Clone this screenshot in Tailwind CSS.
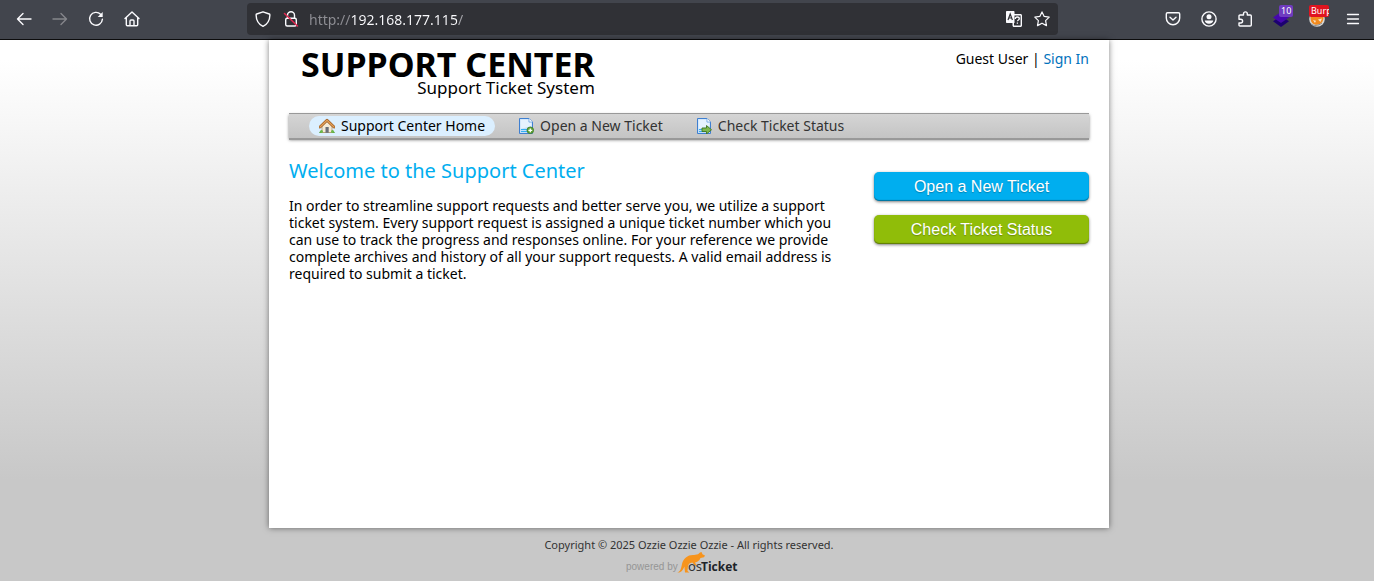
<!DOCTYPE html>
<html lang="en">
<head>
  <meta charset="UTF-8" />
  <meta name="viewport" content="width=device-width, initial-scale=1.0" />
  <title>Support Center</title>
  <script src="https://cdn.jsdelivr.net/npm/@tailwindcss/browser@4"></script>
</head>
<body class="min-h-screen flex flex-col bg-[#c8c8c8] font-['Noto_Sans',sans-serif] text-sm text-black">
  <!-- Browser toolbar -->
  <div class="h-10 shrink-0 flex items-center pb-px bg-[#42454d] border-b border-[#0c0c0d] text-[#fbfbfe]">
    <div class="w-[247px] shrink-0 flex pl-1.5">
      <button aria-label="Back" class="w-9 h-8 flex items-center justify-center">
        <svg class="size-4" viewBox="0 0 16 16" fill="none" stroke="currentColor" stroke-width="1.4" stroke-linecap="round" stroke-linejoin="round"><path d="M15 8H1.5M7 2.5 1.5 8 7 13.5" /></svg>
      </button>
      <button aria-label="Forward" disabled class="w-9 h-8 flex items-center justify-center text-[#85868b]">
        <svg class="size-4" viewBox="0 0 16 16" fill="none" stroke="currentColor" stroke-width="1.4" stroke-linecap="round" stroke-linejoin="round"><path d="M1 8h13.5M9 2.5 14.5 8 9 13.5" /></svg>
      </button>
      <button aria-label="Reload" class="w-9 h-8 flex items-center justify-center">
        <svg class="size-4" viewBox="0 0 16 16" fill="none" stroke="currentColor" stroke-width="1.4" stroke-linecap="round"><path d="M12.6 3.3A6.4 6.4 0 1 0 14.4 8.2" /><path d="M14.7 1v5H9.7z" fill="currentColor" stroke="none" /></svg>
      </button>
      <button aria-label="Home" class="w-9 h-8 flex items-center justify-center">
        <svg class="size-4" viewBox="0 0 16 16" fill="none" stroke="currentColor" stroke-width="1.4" stroke-linecap="round" stroke-linejoin="round"><path d="M1 7.5 8 1l7 6.5M2.3 6.7v7c0 .6.4 1 1 1h9.4c.6 0 1-.4 1-1v-7M6 14.5V10c0-.5.4-1 1-1h2c.6 0 1 .5 1 1v4.5" /></svg>
      </button>
    </div>
    <div class="h-8 flex-1 min-w-0 flex items-center bg-[#303136] rounded px-0.5">
      <button aria-label="Tracking protection" class="w-7 h-7 flex items-center justify-center">
        <svg class="size-4" viewBox="0 0 16 16" fill="none" stroke="currentColor" stroke-width="1.4" stroke-linejoin="round"><path d="M8 .8 14.3 3c.5.2.6.5.6.9-.1 4.8-1.9 9-6.9 11.4C3 12.9 1.2 8.7 1.1 3.9c0-.4.1-.7.6-.9z" /></svg>
      </button>
      <button aria-label="Connection is not secure" class="w-7 h-7 flex items-center justify-center">
        <svg class="size-4" viewBox="0 0 16 16" fill="none" stroke="currentColor" stroke-width="1.4" stroke-linejoin="round"><path d="M4.5 7V4.2a3.5 3.5 0 0 1 7 0V7" /><rect x="2.7" y="7.2" width="10.6" height="7.8" rx="1.5" /><path d="M1.5 2.5 14.5 15" stroke="#e22850" stroke-width="1.5" stroke-linecap="round" /></svg>
      </button>
      <input type="text" aria-label="Address" value="http://192.168.177.115/" class="flex-1 min-w-0 h-7 pl-1 text-sm text-transparent caret-white outline-none bg-clip-text bg-[linear-gradient(90deg,#8f8f95_46px,#fbfbfe_46px,#fbfbfe_152px,#a5a5aa_152px)]" />
      <button aria-label="Translate page" class="w-7 h-7 flex items-center justify-center">
        <svg class="size-4" viewBox="0 0 16 16" fill="none"><path d="M1 0h6.5c.6 0 1 .4 1 1v2h6c.8 0 1.5.7 1.5 1.5v10c0 .8-.7 1.5-1.5 1.5H8c-.8 0-1.500-.7-1.500-1.500V12H1c-.6 0-1-.4-1-1V1c0-.6.4-1 1-1z" fill="#fbfbfe" /><path d="M8.500 4.400h6.100v10.200H8V12h.5z" fill="#303136" /><path d="m2 9 2.200-6 2.200 6M2.800 7h2.800" stroke="#303136" stroke-width="1.2" /><path d="M9.300 8c0-1.300.9-2 2-2s2 .7 2 1.700c0 1.300-1.900 1.300-1.900 2.600M11.400 11.500v1.200" stroke="#fbfbfe" stroke-width="1.3" /></svg>
      </button>
      <button aria-label="Bookmark this page" class="w-7 h-7 flex items-center justify-center">
        <svg class="size-4" viewBox="0 0 16 16" fill="none" stroke="currentColor" stroke-width="1.2" stroke-linejoin="round"><path d="m8 .9 2.200 4.500 5 .7-3.600 3.500.9 5L8 12.200l-4.500 2.400.9-5L.8 6.100l5-.7z" /></svg>
      </button>
    </div>
    <div class="w-[316px] shrink-0 flex justify-end pr-[3px]">
      <button aria-label="Pocket" class="w-9 h-8 flex items-center justify-center">
        <svg class="size-4" viewBox="0 0 16 16" fill="none" stroke="currentColor" stroke-width="1.4" stroke-linecap="round" stroke-linejoin="round"><path d="M2.500 1.700h11c.7 0 1.200.5 1.200 1.200v4.200a6.700 6.700 0 0 1-13.400 0V2.900c0-.7.500-1.200 1.200-1.200z" /><path d="M5 6.300 8 9.100l3-2.800" /></svg>
      </button>
      <button aria-label="Account" class="w-9 h-8 flex items-center justify-center">
        <svg class="size-4" viewBox="0 0 16 16" fill="none" stroke="currentColor" stroke-width="1.4"><circle cx="8" cy="8" r="7.1" /><circle cx="8" cy="5.8" r="2.5" fill="currentColor" stroke="none" /><path d="M3.800 9.500h8.400c0 1.900-1.800 3.300-4.200 3.300s-4.200-1.400-4.200-3.300z" fill="currentColor" stroke="none" /></svg>
      </button>
      <button aria-label="Extensions" class="w-9 h-8 flex items-center justify-center">
        <svg class="size-4" viewBox="0 0 16 16" fill="none" stroke="currentColor" stroke-width="1.4" stroke-linejoin="round"><path d="M2 6.500V5c0-.6.400-1 1-1h3.500V2.800a1.900 1.900 0 0 1 3.800 0V4h3c.6 0 1 .4 1 1v9c0 .6-.4 1-1 1H3c-.6 0-1-.4-1-1v-2h1.700a1.900 1.900 0 0 0 0-3.800H2z" /></svg>
      </button>
      <button aria-label="Wappalyzer" class="relative w-9 h-8 flex items-center justify-center">
        <svg class="size-4" viewBox="0 0 16 16"><path d="M0 10.200 8 5l8 5.200L8 16z" fill="#1c0070" /><path d="M0 6.500 8 1l8 5.500-8 5.500z" fill="#4608ad" /></svg>
        <span class="absolute top-0.5 left-4 px-0.5 h-3 rounded-xs bg-[#6f3cc0] text-white text-[9px] leading-3">10</span>
      </button>
      <button aria-label="FoxyProxy" class="relative w-9 h-8 flex items-center justify-center">
        <svg class="size-4" viewBox="0 0 16 16"><circle cx="8" cy="8" r="7.8" fill="#d9d9d6" /><path d="M1.500 6h13c.2 3-1.200 6-4 7.300-2.500 1-5.800.4-7.500-1.600C1.800 10.200 1.400 8 1.500 6z" fill="#f28a1e" /><path d="m4 9 3 .8L6 12zM9 8.500l4-1-1.500 3.500z" fill="#fbe3c4" /><path d="M2 13c3 2 7 2.200 11-1" stroke="#8a8d92" fill="none" /></svg>
        <span class="absolute top-0.5 left-2.5 w-5 h-3 pl-0.5 overflow-hidden rounded-xs bg-[#e0141f] text-white text-[9px] leading-3 text-left">Burp</span>
      </button>
      <button aria-label="Menu" class="w-9 h-8 flex items-center justify-center">
        <svg class="size-4" viewBox="0 0 16 16" stroke="currentColor" stroke-width="1.3" stroke-linecap="round"><path d="M2.500 3.500h11M2.500 8h11M2.500 12.500h11" /></svg>
      </button>
    </div>
  </div>

  <!-- Page -->
  <div class="flex-1 flex flex-col items-center pl-1 bg-[linear-gradient(#fff_20px,#c8c8c8_440px)]">
    <div class="w-full max-w-[840px] min-h-[488px] px-5 bg-white shadow-[0_0_6px_rgba(0,0,0,0.5)]">
      <header class="h-[73px] flex justify-between items-start">
        <a href="#" class="pl-3 pt-2 flex flex-col items-end">
          <span class="text-[34px] leading-8 font-bold">SUPPORT CENTER</span>
          <span class="text-[17px] leading-4">Support Ticket System</span>
        </a>
        <p class="pt-2.5 leading-[18px]">Guest User | <a href="#" class="text-[#0072bc]">Sign In</a></p>
      </header>

      <nav class="h-[25px] mb-px px-5 pt-0.5 flex items-start gap-[13px] border-t border-[#999] bg-linear-to-b from-[#d5d5d5] to-[#c4c4c4] shadow-[0_2px_0_#999,0_2px_3px_rgba(0,0,0,0.5)] text-[#333]">
        <a href="#" class="h-5 px-2.5 flex items-center gap-1.5 rounded-full bg-[#dbefff] text-black">
          <svg class="size-4" viewBox="0 0 16 16"><path d="M0 15c1-2 3-3 5-2.500h6c2-.5 4 .5 5 2.500z" fill="#58a33c" /><path d="M3 8l5-5 5 5v6.500H3z" fill="#f4ead6" stroke="#b59b74" stroke-width=".8" /><rect x="6.5" y="9" width="3.2" height="5.8" fill="#6b6f78" /><path d="M1 9 8 2.200 15 9" fill="none" stroke="#9a5a20" stroke-width="2.8" stroke-linecap="round" stroke-linejoin="round" /><path d="M1 9 8 2.200 15 9" fill="none" stroke="#e3a05a" stroke-width="1.4" stroke-linecap="round" stroke-linejoin="round" /><circle cx="2.5" cy="13.5" r="1.5" fill="#6cb84a" /><circle cx="13.5" cy="13.5" r="1.5" fill="#6cb84a" /></svg>
          Support Center Home
        </a>
        <a href="#" class="h-5 px-2.5 flex items-center gap-1.5">
          <svg class="size-4" viewBox="0 0 16 16"><path d="M1.500.5h9.500L14.500 4v11.500h-13z" fill="#c3def8" stroke="#3f7fd0" /><path d="M2.500 1.500h8v3h3V8L2.500 11z" fill="#e6f2fe" /><path d="M11 .5V4h3.500" fill="#fff" stroke="#6fa5e3" stroke-width=".8" /><path d="M3 11.500h7M3 13.500h7" stroke="#35b0f0" /><circle cx="12.3" cy="12.3" r="3.3" fill="#62a53a" stroke="#3f7a22" stroke-width=".8" /><path d="M12.300 10.400v3.800M10.400 12.300h3.800" stroke="#fff" stroke-width="1.3" /></svg>
          Open a New Ticket
        </a>
        <a href="#" class="h-5 px-2.5 flex items-center gap-1.5">
          <svg class="size-4" viewBox="0 0 16 16"><path d="M1.500.5h9.500L14.500 4v11.500h-13z" fill="#c3def8" stroke="#3f7fd0" /><path d="M2.500 1.500h8v3h3V8L2.500 11z" fill="#e6f2fe" /><path d="M11 .5V4h3.500" fill="#fff" stroke="#6fa5e3" stroke-width=".8" /><path d="M3 11.500h4M3 13.500h6" stroke="#35b0f0" /><path d="M6 10h4.500V7.500l5 4.300-5 4.200v-2.500H6z" fill="#7fb94f" stroke="#41761f" stroke-width=".9" stroke-linejoin="round" /></svg>
          Check Ticket Status
        </a>
      </nav>

      <main class="flex justify-between gap-10">
        <div class="max-w-[545px] pt-5">
          <h1 class="text-xl leading-6 text-[#00aeef]">Welcome to the Support Center</h1>
          <p class="mt-3.5 leading-[17px]">In order to streamline support requests and better serve you, we utilize a support ticket system. Every support request is assigned a unique ticket number which you can use to track the progress and responses online. For your reference we provide complete archives and history of all your support requests. A valid email address is required to submit a ticket.</p>
        </div>
        <div class="w-[215px] shrink-0 pt-[33px] flex flex-col gap-3.5 font-['Liberation_Sans',Arial,sans-serif] text-base text-white text-center leading-[29px]">
          <a href="#" class="rounded-[5px] bg-[#00aeef] shadow-[0_1px_3px_rgba(0,0,0,0.5),inset_0_-1px_1px_rgba(0,0,0,0.35)] text-shadow-[0_1px_1px_rgba(0,0,0,0.25)]">Open a New Ticket</a>
          <a href="#" class="rounded-[5px] bg-[#90bd09] shadow-[0_1px_3px_rgba(0,0,0,0.5),inset_0_-1px_1px_rgba(0,0,0,0.35)] text-shadow-[0_1px_1px_rgba(0,0,0,0.25)]">Check Ticket Status</a>
        </div>
      </main>
    </div>

    <footer class="pt-[9px] flex flex-col items-center text-[11px] leading-[15px] text-[#333]">
      <p>Copyright © 2025 Ozzie Ozzie Ozzie - All rights reserved.</p>
      <a href="#" aria-label="powered by osTicket">
        <svg class="w-[126px] h-[22px]" viewBox="0 0 126 22">
          <text x="0" y="18" font-family="Liberation Sans" font-size="10" fill="#959595">powered by</text>
          <path d="M51 20.500c3.500-.5 4-4 5-8.500 1.500-6 6-9.500 12-9l4-.8L74 .5l1.500-.5 1 2.300 2.500 1.200-1 1.700-3.500.8c-1 3-3 3.800-5.500 4.600l1.800 3.400-2-.4-2.400-3.100c-2.600.3-4 1.500-4.400 3.500l-.5 5 2 1.500h-4.500l-.6-6C57 18 55 21.300 51 20.500z" fill="#f7941d" />
          <text x="62" y="19" font-family="Noto Sans" font-size="13" fill="#333">os</text>
          <text x="75" y="19" font-family="Open Sans" font-size="12" font-weight="700" fill="#1d2329">Ticket</text>
        </svg>
      </a>
    </footer>
  </div>
</body>
</html>
